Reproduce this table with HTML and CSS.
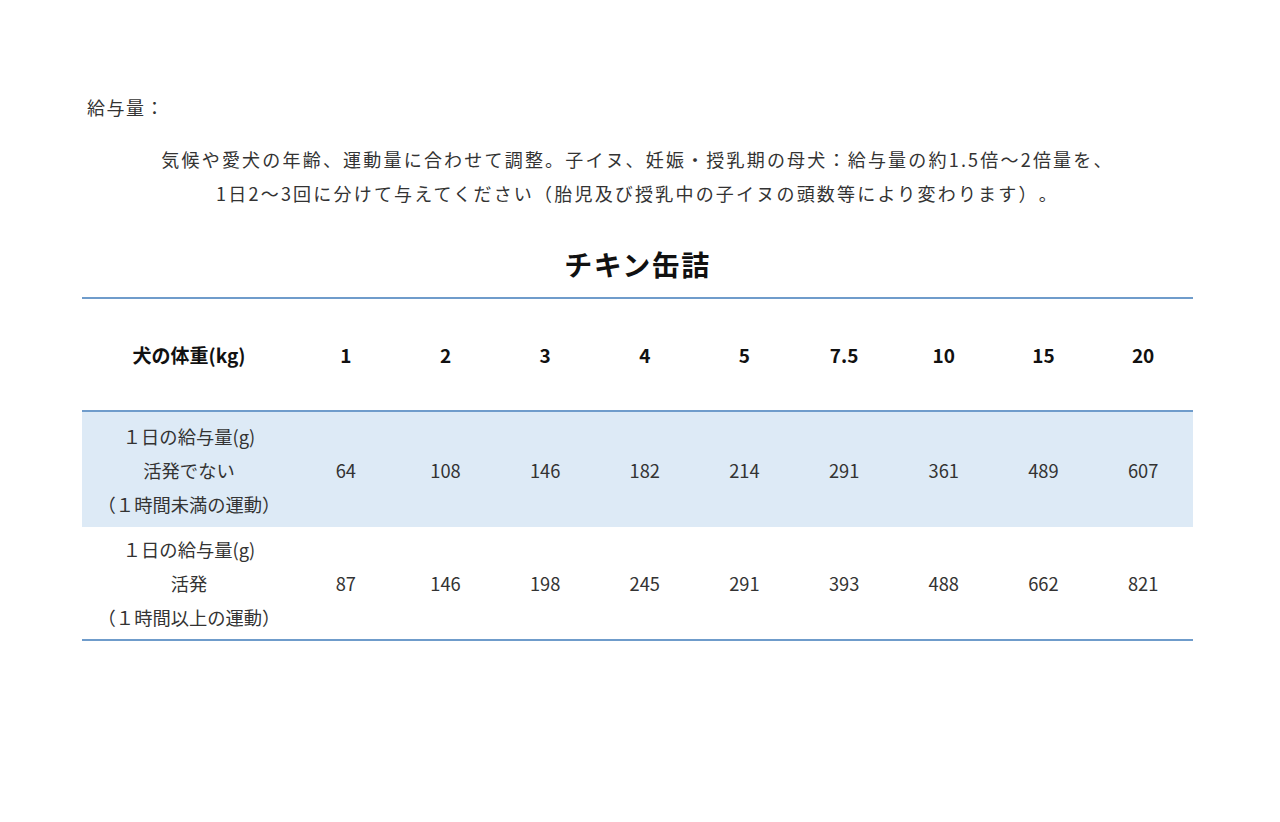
FILE: index.html
```html
<!DOCTYPE html>
<html lang="ja">
<head>
<meta charset="utf-8">
<title>給与量</title>
<link rel="stylesheet" href="styles.css">
</head>
<body>
<main class="page">
  <p class="label">給与量：</p>
  <p class="note">気候や愛犬の年齢、運動量に合わせて調整。子イヌ、妊娠・授乳期の母犬：給与量の約1.5倍～2倍量を、<br>1日2～3回に分けて与えてください（胎児及び授乳中の子イヌの頭数等により変わります）。</p>
  <h2 class="title">チキン缶詰</h2>
  <table class="feed">
    <thead>
      <tr>
        <th class="name">犬の体重(kg)</th>
        <th>1</th><th>2</th><th>3</th><th>4</th><th>5</th><th>7.5</th><th>10</th><th>15</th><th>20</th>
      </tr>
    </thead>
    <tbody>
      <tr class="shaded">
        <td class="name">１日の給与量(g)<br>活発でない<br>（１時間未満の運動）</td>
        <td>64</td><td>108</td><td>146</td><td>182</td><td>214</td><td>291</td><td>361</td><td>489</td><td>607</td>
      </tr>
      <tr class="last">
        <td class="name">１日の給与量(g)<br>活発<br>（１時間以上の運動）</td>
        <td>87</td><td>146</td><td>198</td><td>245</td><td>291</td><td>393</td><td>488</td><td>662</td><td>821</td>
      </tr>
    </tbody>
  </table>
</main>
</body>
</html>
```

FILE: styles.css
```css
html, body {
  margin: 0;
  padding: 0;
  background: #ffffff;
}

body {
  font-family: "Noto Sans CJK JP", "Noto Sans", sans-serif;
  color: #333333;
  text-spacing-trim: space-all;
}

.page {
  padding: 90px 87px 0 82px;
}

.label {
  margin: 0 0 0 5px;
  font-size: 18px;
  line-height: 34px;
  letter-spacing: 1.5px;
}

.note {
  margin: 18px 0 0 0;
  text-align: center;
  font-size: 18px;
  line-height: 34px;
  letter-spacing: 2.2px;
}

.title {
  margin: 34px 0 0 0;
  text-align: center;
  font-size: 28px;
  line-height: 40px;
  font-weight: 700;
  color: #111111;
  letter-spacing: 1.5px;
}

.feed {
  margin-top: 13px;
  width: 1111px;
  border-collapse: separate;
  border-spacing: 0;
  table-layout: fixed;
  font-size: 18px;
}

.feed th,
.feed td {
  padding: 0;
  text-align: center;
  vertical-align: middle;
}

.feed .name {
  width: 214px;
}

.feed thead th {
  height: 111px;
  border-top: 2px solid #6f9ccb;
  border-bottom: 2px solid #6f9ccb;
  font-weight: 700;
  font-size: 19px;
  color: #111111;
}

.feed tbody td {
  line-height: 34px;
  font-size: 18.3px;
  color: #333333;
}

.feed tr.shaded td {
  height: 115px;
  background: #ddeaf6;
}

.feed tr.last td {
  height: 112px;
  border-bottom: 2px solid #6f9ccb;
}
```
